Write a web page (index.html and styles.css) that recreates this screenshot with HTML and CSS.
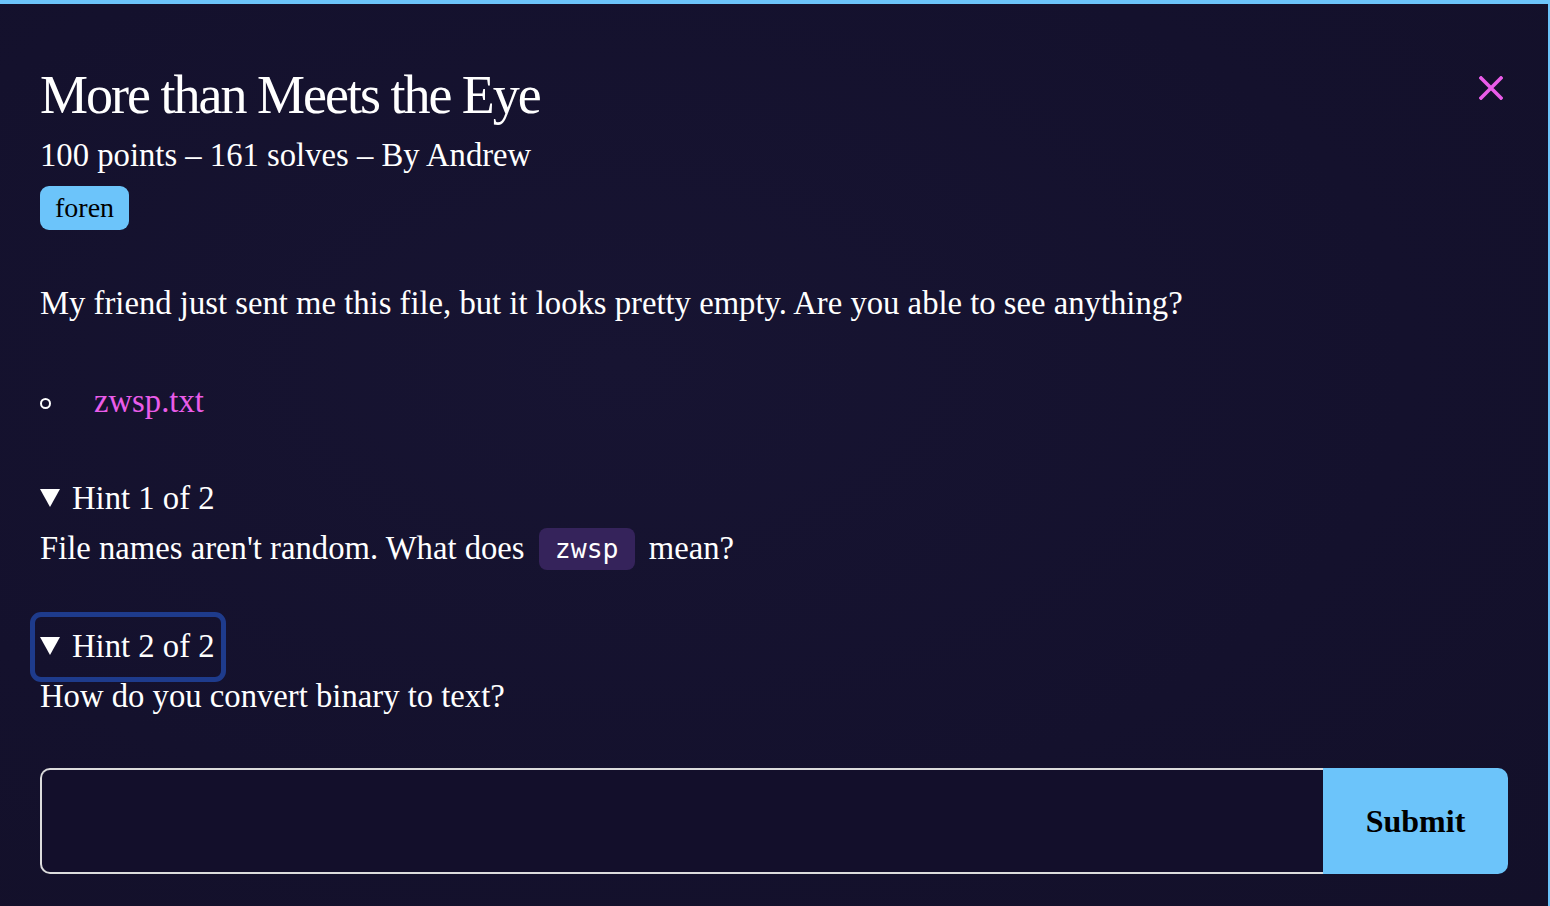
FILE: index.html
```html
<!DOCTYPE html>
<html>
<head>
<meta charset="utf-8">
<link rel="stylesheet" href="styles.css">
</head>
<body>
<div class="frame">
  <div class="modal">
    <div class="head">
      <div class="head-text">
        <h1 class="title">More than Meets the Eye</h1>
        <div class="meta">100 points – 161 solves – By Andrew</div>
        <div class="tags"><span class="tag">foren</span></div>
      </div>
      <button class="close" aria-label="Close">
        <svg width="24" height="24" viewBox="0 0 24 24"><path d="M2 2 L22 22 M22 2 L2 22" stroke="#ea5ce9" stroke-width="3.6" stroke-linecap="square" fill="none"/></svg>
      </button>
    </div>
    <p class="desc">My friend just sent me this file, but it looks pretty empty. Are you able to see anything?</p>
    <ul class="files">
      <li class="file-item"><a class="file-link" href="#">zwsp.txt</a></li>
    </ul>
    <details class="hint hint-first" open>
      <summary class="hint-sum">Hint 1 of 2</summary>
      <div class="hint-body">File names aren't random. What does <code class="code">zwsp</code> mean?</div>
    </details>
    <details class="hint hint-second" open>
      <summary class="hint-sum focused">Hint 2 of 2</summary>
      <div class="hint-body">How do you convert binary to text?</div>
    </details>
    <form class="flag-form">
      <input class="flag-input" type="text">
      <button class="submit" type="button">Submit</button>
    </form>
  </div>
</div>
</body>
</html>
```
FILE: styles.css
```css
html, body {
  margin: 0;
  padding: 0;
  height: 100%;
}
body {
  background: #14112d;
  font-family: "Liberation Serif", "Times New Roman", serif;
  color: #ffffff;
}
.frame {
  box-sizing: border-box;
  height: 906px;
  border-top: 4px solid #6cc4fa;
  border-right: 2px solid #6cc4fa;
  background: radial-gradient(ellipse at 40% 40%, #171432 0%, #14112d 60%, #131029 100%);
  overflow: hidden;
}
.modal {
  padding: 0 40px 0 40px;
  font-size: 32.7px;
  line-height: 40px;
}
.head {
  display: flex;
  justify-content: space-between;
  align-items: flex-start;
}
.title {
  margin: 0;
  padding-top: 60px;
  font-weight: normal;
  font-size: 54px;
  line-height: 62px;
  letter-spacing: -2px;
}
.meta {
  margin-top: 9px;
}
.tags {
  margin-top: 11px;
  display: flex;
}
.tag {
  background: #6cc4fa;
  color: #000;
  font-size: 28px;
  line-height: 44px;
  padding: 0 15px;
  border-radius: 9px;
}
.close {
  margin-top: 72px;
  margin-right: 5px;
  background: none;
  border: 0;
  padding: 0;
  width: 24px;
  height: 24px;
  display: flex;
}
.desc {
  margin: 53px 0 0;
}
.files {
  list-style: none;
  margin: 58px 0 0;
  padding: 0;
}
.file-item {
  display: flex;
  align-items: baseline;
}
.file-item::before {
  content: "";
  box-sizing: border-box;
  width: 11px;
  height: 11px;
  border: 2px solid #fff;
  border-radius: 50%;
  margin-right: 43px;
  align-self: center;
  position: relative;
  top: 2px;
}
.file-link {
  color: #ea5ce9;
  text-decoration: none;
}
.hint-first {
  margin-top: 57px;
}
.hint-second {
  margin-top: 56px;
}
.hint-sum {
  display: inline-block;
  list-style: none;
  cursor: pointer;
  padding: 4px 1px 6px 0;
  margin: -4px 0 -6px 0;
}
.hint-sum::-webkit-details-marker {
  display: none;
}
.hint-sum::before {
  content: "";
  display: inline-block;
  width: 0;
  height: 0;
  border-left: 10.5px solid transparent;
  border-right: 10.5px solid transparent;
  border-top: 18px solid #fff;
  margin-right: 12px;
  vertical-align: 2px;
}
.focused {
  outline: 5px solid #1e3b8c;
  outline-offset: 5px;
  border-radius: 1px;
}
.hint-body {
  margin-top: 10px;
}
.code {
  display: inline-block;
  font-family: "DejaVu Sans Mono", monospace;
  font-size: 26.5px;
  line-height: 42px;
  background: #35235b;
  border-radius: 8px;
  padding: 0 16px;
  margin: 0 6px;
  vertical-align: 1px;
}
.flag-form {
  display: flex;
  margin-top: 52px;
  height: 106px;
}
.flag-input {
  flex: 1;
  box-sizing: border-box;
  height: 106px;
  background: #130f2b;
  border: 2px solid #dcdcdc;
  border-right: 0;
  border-radius: 10px 0 0 10px;
  margin: 0;
  outline: none;
  color: #fff;
}
.submit {
  width: 185px;
  height: 106px;
  background: #6cc4fa;
  border: 0;
  border-radius: 0 10px 10px 0;
  font-family: "Liberation Serif", "Times New Roman", serif;
  font-weight: bold;
  font-size: 32px;
  color: #000;
  padding: 0;
  margin: 0;
}
```
